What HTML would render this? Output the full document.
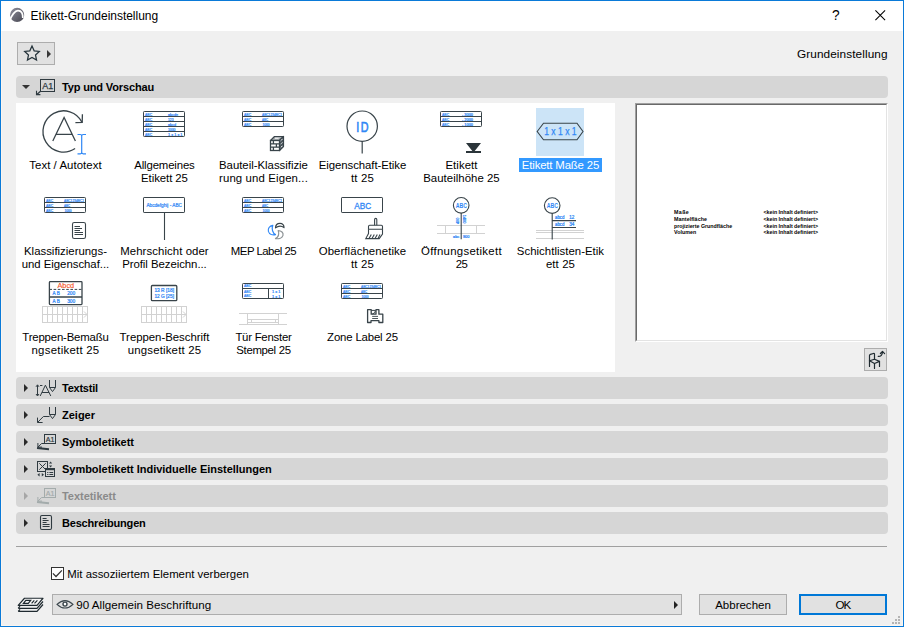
<!DOCTYPE html>
<html lang="de">
<head>
<meta charset="utf-8">
<title>Etikett-Grundeinstellung</title>
<style>
*{box-sizing:border-box;margin:0;padding:0}
html,body{width:904px;height:627px;overflow:hidden}
body{background:#f0f0f0;font-family:"Liberation Sans",sans-serif;font-size:11.5px;color:#000;position:relative}
.abs{position:absolute}
svg{display:block;overflow:visible}
#win{position:absolute;left:0;top:0;width:904px;height:627px;border:1px solid #0a7ad8;z-index:50}
#inb{position:absolute;left:1px;top:31px;width:902px;height:595px;border:1px solid #fbf5ef;border-top:0;z-index:49}
#titlebar{position:absolute;left:1px;top:1px;width:902px;height:30px;background:#fff}
.t{position:absolute;white-space:pre;line-height:14px;height:14px}
.hdr{position:absolute;left:16px;width:872px;height:22px;background:#d6d6d6;border-radius:4px}
.tri-r{position:absolute;left:8px;top:6.6px;width:0;height:0;border-left:4.5px solid #2a2a2a;border-top:4px solid transparent;border-bottom:4px solid transparent}
.tri-d{position:absolute;left:5.8px;top:8.8px;width:0;height:0;border-top:4.6px solid #333;border-left:4.1px solid transparent;border-right:4.1px solid transparent}
.hdr.dis .tri-r{border-left-color:#a6a6a6}
.hdr svg{position:absolute;left:0;top:0}
#list{position:absolute;left:16px;top:103px;width:599px;height:269px;background:#fff}
#preview{position:absolute;left:635px;top:103px;width:253px;height:239px;background:#fff;border-top:1px solid #a0a0a0;border-left:1px solid #a0a0a0;border-right:1px solid #fff;border-bottom:1px solid #fff}
#preview .in{position:absolute;left:0;top:0;right:0;bottom:0;border-top:1px solid #696969;border-left:1px solid #696969;border-right:1px solid #e3e3e3;border-bottom:1px solid #e3e3e3}
.pv{position:absolute;font-size:5.6px;line-height:6px;white-space:nowrap;color:#000;font-weight:bold;letter-spacing:-0.35px}
.btn{position:absolute;background:#e1e1e1;border:1px solid #adadad}
</style>
</head>
<body>
<div id="titlebar">
  <svg class="abs" style="left:8px;top:6px" width="16" height="16" viewBox="0 0 16 16">
    <defs><linearGradient id="g1" x1="0" y1="0" x2="1" y2="1"><stop offset="0" stop-color="#90909e"/><stop offset="1" stop-color="#44444e"/></linearGradient></defs>
    <circle cx="8.1" cy="7.9" r="7.1" fill="url(#g1)"/>
    <path d="M0.3 14.2C2.5 9 5.5 3.8 8.8 3.6C12.5 3.4 13.9 6.5 13.8 10.9" fill="none" stroke="#fff" stroke-width="1.7"/>
  </svg>
  <div class="t" style="left:831px;top:7.2px;font-size:13.8px;line-height:16px">?</div>
  <svg class="abs" style="left:874px;top:9px" width="12" height="12" viewBox="0 0 12 12"><path d="M0.4 0.4 L10.1 10.1 M10.1 0.4 L0.4 10.1" stroke="#000" stroke-width="1.05" fill="none"/></svg>
</div>

<!-- favourites button -->
<div class="btn" style="left:17px;top:42px;width:38px;height:23px">
  <svg class="abs" style="left:0;top:0" width="36" height="21" viewBox="0 0 36 21"><path d="M14.00 3.10L16.17 7.81L21.32 8.42L17.52 11.94L18.53 17.03L14.00 14.50L9.47 17.03L10.48 11.94L6.68 8.42L11.83 7.81Z" fill="none" stroke="#26343c" stroke-width="1.25" stroke-linejoin="miter"/></svg>
  <div class="abs" style="left:28.6px;top:6.5px;width:0;height:0;border-left:4.2px solid #383838;border-top:4px solid transparent;border-bottom:4px solid transparent"></div>
</div>

<div id="list"></div>
<div class="hdr" style="top:76px"><div class="tri-d"></div><svg width="44" height="22" viewBox="0 0 44 22" font-family='"Liberation Sans",sans-serif'><rect x="24.5" y="3.5" width="14" height="12" fill="none" stroke="#2f3a40" stroke-width="1"/><text x="31.7" y="12.9" font-size="9.4" fill="#2f3a40" text-anchor="middle" font-weight="normal" stroke="#2f3a40" stroke-width="0.25" textLength="11" lengthAdjust="spacingAndGlyphs">A1</text><path d="M24.5 15.3L20.8 18.4" fill="none" stroke="#2f3a40" stroke-width="1.3"/><path d="M20.5 14.8V18.6H24.4" fill="none" stroke="#2f3a40" stroke-width="1.1"/></svg></div>
<div class="t" style="left:62.00px;top:80.19px;font-size:11px;letter-spacing:-0.145px;font-weight:bold;">Typ und Vorschau</div>
<div class="hdr" style="top:377px"><div class="tri-r"></div><svg width="44" height="22" viewBox="0 0 44 22" font-family='"Liberation Sans",sans-serif'><path d="M21.5 8.2V18.4M20 9.8L21.5 7.8L23 9.8M20 17L21.5 19L23 17" fill="none" stroke="#2f3a40" stroke-width="1"/><path d="M24.2 19L29.4 8.2L34.8 19M26 15.5H33M24 8.5H26.4" fill="none" stroke="#2f3a40" stroke-width="1"/><path d="M33.5 3V10.5L36.5 14.6L39.5 10.5V3M33.5 10.5H39.5" fill="none" stroke="#2f3a40" stroke-width="1"/></svg></div>
<div class="t" style="left:62.00px;top:381.19px;font-size:11px;letter-spacing:-0.237px;font-weight:bold;">Textstil</div>
<div class="hdr" style="top:404px"><div class="tri-r"></div><svg width="44" height="22" viewBox="0 0 44 22" font-family='"Liberation Sans",sans-serif'><path d="M33.5 12.5H27.4L21.6 18.4M21.5 13.6V18.5H26.6" fill="none" stroke="#2f3a40" stroke-width="1"/><path d="M33.5 3V10.5L36.5 14.6L39.5 10.5V3M33.5 10.5H39.5" fill="none" stroke="#2f3a40" stroke-width="1"/></svg></div>
<div class="t" style="left:62.00px;top:408.19px;font-size:11px;letter-spacing:-0.002px;font-weight:bold;">Zeiger</div>
<div class="hdr" style="top:431px"><div class="tri-r"></div><svg width="44" height="22" viewBox="0 0 44 22" font-family='"Liberation Sans",sans-serif'><rect x="28.5" y="3.5" width="11" height="9" fill="none" stroke="#2f3a40" stroke-width="1"/><text x="34.1" y="11.1" font-size="7.4" fill="#2f3a40" text-anchor="middle" font-weight="normal" stroke="#2f3a40" stroke-width="0.2" textLength="8.6" lengthAdjust="spacingAndGlyphs">A1</text><path d="M28.5 12.5H25.6L22 16M21.9 12V16.1H26" fill="none" stroke="#2f3a40" stroke-width="1"/><path d="M21 16.9L33 18.2" stroke="#2f3a40" stroke-width="2"/></svg></div>
<div class="t" style="left:62.00px;top:435.19px;font-size:11px;letter-spacing:-0.010px;font-weight:bold;">Symboletikett</div>
<div class="hdr" style="top:458px"><div class="tri-r"></div><svg width="44" height="22" viewBox="0 0 44 22" font-family='"Liberation Sans",sans-serif'><rect x="21.5" y="3.5" width="10" height="10" fill="none" stroke="#2f3a40" stroke-width="1"/><path d="M23.3 5.3L29.7 11.7M29.7 5.3L23.3 11.7" stroke="#2f3a40" stroke-width="1"/><path d="M33 5.6L34.6 3.4L36.2 5.6ZM33 7.4L34.6 9.6L36.2 7.4ZM23.6 15L21.4 16.7L23.6 18.4ZM25.8 15L28 16.7L25.8 18.4Z" fill="#2f3a40"/><rect x="29.5" y="10.5" width="9" height="8" fill="#d6d6d6" stroke="#2f3a40" stroke-width="1"/><path d="M29.5 11.5H38.5" stroke="#2f3a40" stroke-width="1.4"/><path d="M31.2 14.5H32.4M33.4 14.5H37.2M31.2 16.5H32.4M33.4 16.5H37.2" stroke="#2f3a40" stroke-width="1"/></svg></div>
<div class="t" style="left:62.00px;top:462.19px;font-size:11px;letter-spacing:-0.029px;font-weight:bold;">Symboletikett Individuelle Einstellungen</div>
<div class="hdr dis" style="top:485px"><div class="tri-r"></div><svg width="44" height="22" viewBox="0 0 44 22" font-family='"Liberation Sans",sans-serif'><rect x="28.5" y="3.5" width="11" height="9" fill="none" stroke="#a3abab" stroke-width="1"/><text x="34.1" y="11.1" font-size="7.4" fill="#a3abab" text-anchor="middle" font-weight="normal" stroke="#a3abab" stroke-width="0.2" textLength="8.6" lengthAdjust="spacingAndGlyphs">A1</text><path d="M28.5 12.5H25.6L22 16M21.9 12V16.1H26" fill="none" stroke="#a3abab" stroke-width="1"/><path d="M21 16.9L33 18.2" stroke="#a3abab" stroke-width="2"/></svg></div>
<div class="t" style="left:62.00px;top:489.19px;font-size:11px;letter-spacing:-0.036px;font-weight:bold;color:#8a8a8a;">Textetikett</div>
<div class="hdr" style="top:512px"><div class="tri-r"></div><svg width="44" height="22" viewBox="0 0 44 22" font-family='"Liberation Sans",sans-serif'><rect x="24.5" y="3.5" width="11" height="14" rx="1.4" fill="none" stroke="#2f3a40" stroke-width="1.1"/><path d="M26.6 6.5H30.6M26.6 8.5H32.6M26.6 10.5H30.6M26.6 12.5H33.6M26.6 14.5H33.6" stroke="#2f3a40" stroke-width="1"/></svg></div>
<div class="t" style="left:62.00px;top:516.19px;font-size:11px;letter-spacing:-0.185px;font-weight:bold;">Beschreibungen</div>
<svg class="abs" style="left:41.0px;top:108px" width="48" height="48" viewBox="0 0 48 48" font-family='"Liberation Sans",sans-serif'><path d="M41.1 14.4A20.6 20.6 0 1 0 34.1 40.5" fill="none" stroke="#39444a" stroke-width="1.3"/><path d="M34.4 14.6L41.2 14.3L41.4 6.2" fill="none" stroke="#39444a" stroke-width="1.3"/><path d="M11.8 33L23.1 9.4L34.4 33M15.2 26.4H31.2" fill="none" stroke="#39444a" stroke-width="1.3"/><path d="M36.5 26.5H39.3Q40.7 26.5 40.7 28V44.3Q40.7 45.8 39.3 45.8H36.5M45 26.5H42.2Q40.7 26.5 40.7 28M40.7 44.3Q40.7 45.8 42.2 45.8H45" fill="none" stroke="#2f87f5" stroke-width="1.2"/></svg>
<div class="t" style="left:29.30px;top:157.65px;font-size:11.4px;letter-spacing:0.053px;">Text / Autotext</div>
<svg class="abs" style="left:140.0px;top:108px" width="48" height="48" viewBox="0 0 48 48" font-family='"Liberation Sans",sans-serif'><rect x="3.5" y="3.5" width="41.0" height="25.0" rx="0.8" fill="#fff" stroke="#39444a" stroke-width="1"/><path d="M3.5 8.50H44.5" stroke="#39444a" stroke-width="1"/><path d="M3.5 13.50H44.5" stroke="#39444a" stroke-width="1"/><path d="M3.5 18.50H44.5" stroke="#39444a" stroke-width="1"/><path d="M3.5 23.50H44.5" stroke="#39444a" stroke-width="1"/><text x="5.1" y="7.70" font-size="3.6" fill="#2f87f5" text-anchor="start" font-weight="normal" stroke="#2f87f5" stroke-width="0.22" textLength="7" lengthAdjust="spacingAndGlyphs">ABC</text><text x="28" y="7.70" font-size="3.6" fill="#2f87f5" text-anchor="start" font-weight="normal" stroke="#2f87f5" stroke-width="0.22" textLength="10" lengthAdjust="spacingAndGlyphs">abcde</text><text x="5.1" y="12.70" font-size="3.6" fill="#2f87f5" text-anchor="start" font-weight="normal" stroke="#2f87f5" stroke-width="0.22" textLength="7" lengthAdjust="spacingAndGlyphs">ABC</text><text x="28" y="12.70" font-size="3.6" fill="#2f87f5" text-anchor="start" font-weight="normal" stroke="#2f87f5" stroke-width="0.22" textLength="5.5" lengthAdjust="spacingAndGlyphs">123</text><text x="5.1" y="17.70" font-size="3.6" fill="#2f87f5" text-anchor="start" font-weight="normal" stroke="#2f87f5" stroke-width="0.22" textLength="7" lengthAdjust="spacingAndGlyphs">ABC</text><text x="28" y="17.70" font-size="3.6" fill="#2f87f5" text-anchor="start" font-weight="normal" stroke="#2f87f5" stroke-width="0.22" textLength="8" lengthAdjust="spacingAndGlyphs">abcd</text><text x="5.1" y="22.70" font-size="3.6" fill="#2f87f5" text-anchor="start" font-weight="normal" stroke="#2f87f5" stroke-width="0.22" textLength="7" lengthAdjust="spacingAndGlyphs">ABC</text><text x="28" y="22.70" font-size="3.6" fill="#2f87f5" text-anchor="start" font-weight="normal" stroke="#2f87f5" stroke-width="0.22" textLength="7.5" lengthAdjust="spacingAndGlyphs">1000</text><text x="5.1" y="27.70" font-size="3.6" fill="#2f87f5" text-anchor="start" font-weight="normal" stroke="#2f87f5" stroke-width="0.22" textLength="7" lengthAdjust="spacingAndGlyphs">ABC</text><text x="28" y="27.70" font-size="3.6" fill="#2f87f5" text-anchor="start" font-weight="normal" stroke="#2f87f5" stroke-width="0.22" textLength="14.5" lengthAdjust="spacingAndGlyphs">1 x 1 x 1</text></svg>
<div class="t" style="left:134.30px;top:157.65px;font-size:11.4px;letter-spacing:-0.155px;">Allgemeines</div>
<div class="t" style="left:141.10px;top:170.65px;font-size:11.4px;letter-spacing:-0.073px;">Etikett 25</div>
<svg class="abs" style="left:239.0px;top:108px" width="48" height="48" viewBox="0 0 48 48" font-family='"Liberation Sans",sans-serif'><rect x="3.5" y="3.5" width="41.0" height="15.0" rx="0.8" fill="#fff" stroke="#39444a" stroke-width="1"/><path d="M3.5 8.50H44.5" stroke="#39444a" stroke-width="1"/><path d="M3.5 13.50H44.5" stroke="#39444a" stroke-width="1"/><text x="5.1" y="7.70" font-size="3.6" fill="#2f87f5" text-anchor="start" font-weight="normal" stroke="#2f87f5" stroke-width="0.22" textLength="7" lengthAdjust="spacingAndGlyphs">ABC</text><text x="23" y="7.70" font-size="3.6" fill="#2f87f5" text-anchor="start" font-weight="normal" stroke="#2f87f5" stroke-width="0.22" textLength="20" lengthAdjust="spacingAndGlyphs">ABC1234BC1</text><text x="5.1" y="12.70" font-size="3.6" fill="#2f87f5" text-anchor="start" font-weight="normal" stroke="#2f87f5" stroke-width="0.22" textLength="7" lengthAdjust="spacingAndGlyphs">ABC</text><text x="23" y="12.70" font-size="3.6" fill="#2f87f5" text-anchor="start" font-weight="normal" stroke="#2f87f5" stroke-width="0.22" textLength="6" lengthAdjust="spacingAndGlyphs">ABC</text><text x="5.1" y="17.70" font-size="3.6" fill="#2f87f5" text-anchor="start" font-weight="normal" stroke="#2f87f5" stroke-width="0.22" textLength="7" lengthAdjust="spacingAndGlyphs">ABC</text><text x="23.5" y="17.70" font-size="3.6" fill="#2f87f5" text-anchor="start" font-weight="normal" stroke="#2f87f5" stroke-width="0.22" textLength="7" lengthAdjust="spacingAndGlyphs">1000</text><path d="M31.5 32.5L35.5 28.5H44.5L40.5 32.5Z" fill="#a9afb2" stroke="#39444a" stroke-width="1.2" stroke-linejoin="round"/><path d="M40.5 32.5L44.5 28.5V38.5L40.5 42.5Z" fill="#79838a" stroke="#39444a" stroke-width="1.2" stroke-linejoin="round"/><rect x="31.5" y="32.5" width="9" height="10" fill="#fff" stroke="#39444a" stroke-width="1.3"/><path d="M31.5 35.8H40.5M31.5 39.2H40.5M34.4 32.5V35.8M37.4 35.8V39.2M34.4 39.2V42.5" stroke="#39444a" stroke-width="1.3" fill="none"/><path d="M36 30.3H39.6" stroke="#fff" stroke-width="0.9"/><path d="M40.5 35.8L44.5 31.8M40.5 39.2L44.5 35.2" stroke="#39444a" stroke-width="1.1"/><path d="M42.2 32.2L43.2 31.2M42.2 35.6L43.2 34.6M42.2 39L43.2 38" stroke="#fff" stroke-width="0.9"/></svg>
<div class="t" style="left:219.00px;top:157.65px;font-size:11.4px;letter-spacing:-0.018px;">Bauteil-Klassifizie</div>
<div class="t" style="left:219.00px;top:170.65px;font-size:11.4px;letter-spacing:0.128px;">rung und Eigen...</div>
<svg class="abs" style="left:338.0px;top:108px" width="48" height="48" viewBox="0 0 48 48" font-family='"Liberation Sans",sans-serif'><circle cx="24.2" cy="18.2" r="15.2" fill="#fff" stroke="#39444a" stroke-width="1.2"/><path d="M24.2 33.2V45.5" stroke="#39444a" stroke-width="1.2"/><text x="0" y="0" font-size="13.8" fill="#2f87f5" text-anchor="start" font-weight="normal" transform="translate(18.2 23.8) scale(0.78 1)" letter-spacing="2.05" stroke="#2f87f5" stroke-width="0.6">ID</text></svg>
<div class="t" style="left:318.70px;top:157.65px;font-size:11.4px;letter-spacing:-0.065px;">Eigenschaft-Etike</div>
<div class="t" style="left:350.90px;top:170.65px;font-size:11.4px;letter-spacing:0.203px;">tt 25</div>
<svg class="abs" style="left:437.0px;top:108px" width="48" height="48" viewBox="0 0 48 48" font-family='"Liberation Sans",sans-serif'><rect x="3.5" y="3.5" width="41.0" height="15.0" rx="0.8" fill="#fff" stroke="#39444a" stroke-width="1"/><path d="M3.5 8.50H44.5" stroke="#39444a" stroke-width="1"/><path d="M3.5 13.50H44.5" stroke="#39444a" stroke-width="1"/><text x="5.1" y="7.70" font-size="3.6" fill="#2f87f5" text-anchor="start" font-weight="normal" stroke="#2f87f5" stroke-width="0.22" textLength="7" lengthAdjust="spacingAndGlyphs">ABC</text><text x="25" y="7.70" font-size="3.6" fill="#2f87f5" text-anchor="start" font-weight="normal" stroke="#2f87f5" stroke-width="0.22" textLength="11" lengthAdjust="spacingAndGlyphs">- 3000</text><text x="5.1" y="12.70" font-size="3.6" fill="#2f87f5" text-anchor="start" font-weight="normal" stroke="#2f87f5" stroke-width="0.22" textLength="7" lengthAdjust="spacingAndGlyphs">ABC</text><text x="25" y="12.70" font-size="3.6" fill="#2f87f5" text-anchor="start" font-weight="normal" stroke="#2f87f5" stroke-width="0.22" textLength="11" lengthAdjust="spacingAndGlyphs">- 2000</text><text x="5.1" y="17.70" font-size="3.6" fill="#2f87f5" text-anchor="start" font-weight="normal" stroke="#2f87f5" stroke-width="0.22" textLength="7" lengthAdjust="spacingAndGlyphs">ABC</text><text x="25" y="17.70" font-size="3.6" fill="#2f87f5" text-anchor="start" font-weight="normal" stroke="#2f87f5" stroke-width="0.22" textLength="11" lengthAdjust="spacingAndGlyphs">- 1000</text><path d="M29 35H44L37.7 43H44V45H29V43H35.3Z" fill="#2b353a"/></svg>
<div class="t" style="left:445.40px;top:157.65px;font-size:11.4px;letter-spacing:0.074px;">Etikett</div>
<div class="t" style="left:423.20px;top:170.65px;font-size:11.4px;letter-spacing:0.038px;">Bauteilhöhe 25</div>
<div class="abs" style="left:536.0px;top:108px;width:48px;height:48px;background:#cce4f7"></div>
<div class="abs" style="left:519px;top:158px;width:83px;height:14px;background:#3399ff"></div>
<svg class="abs" style="left:536.0px;top:108px" width="48" height="48" viewBox="0 0 48 48" font-family='"Liberation Sans",sans-serif'><path d="M1.2 23.5L7.5 15.2H41L47 23.5L41 31.8H7.5Z" fill="none" stroke="#39444a" stroke-width="1.1"/><text x="24.4" y="27.4" font-size="10.2" fill="#2f87f5" text-anchor="middle" font-weight="normal" stroke="#2f87f5" stroke-width="0.25" textLength="32.4" lengthAdjust="spacingAndGlyphs">1 x 1 x 1</text></svg>
<div class="t" style="left:521.85px;top:157.65px;font-size:11.4px;letter-spacing:-0.169px;color:#fff;">Etikett Maße 25</div>
<svg class="abs" style="left:41.0px;top:194px" width="48" height="48" viewBox="0 0 48 48" font-family='"Liberation Sans",sans-serif'><rect x="3.5" y="3.5" width="41.0" height="15.0" rx="0.8" fill="#fff" stroke="#39444a" stroke-width="1"/><path d="M3.5 8.50H44.5" stroke="#39444a" stroke-width="1"/><path d="M3.5 13.50H44.5" stroke="#39444a" stroke-width="1"/><text x="5.1" y="7.70" font-size="3.6" fill="#2f87f5" text-anchor="start" font-weight="normal" stroke="#2f87f5" stroke-width="0.22" textLength="7" lengthAdjust="spacingAndGlyphs">ABC</text><text x="23" y="7.70" font-size="3.6" fill="#2f87f5" text-anchor="start" font-weight="normal" stroke="#2f87f5" stroke-width="0.22" textLength="20" lengthAdjust="spacingAndGlyphs">ABC1234BC1</text><text x="5.1" y="12.70" font-size="3.6" fill="#2f87f5" text-anchor="start" font-weight="normal" stroke="#2f87f5" stroke-width="0.22" textLength="7" lengthAdjust="spacingAndGlyphs">ABC</text><text x="23" y="12.70" font-size="3.6" fill="#2f87f5" text-anchor="start" font-weight="normal" stroke="#2f87f5" stroke-width="0.22" textLength="6" lengthAdjust="spacingAndGlyphs">ABC</text><text x="5.1" y="17.70" font-size="3.6" fill="#2f87f5" text-anchor="start" font-weight="normal" stroke="#2f87f5" stroke-width="0.22" textLength="7" lengthAdjust="spacingAndGlyphs">ABC</text><text x="23.5" y="17.70" font-size="3.6" fill="#2f87f5" text-anchor="start" font-weight="normal" stroke="#2f87f5" stroke-width="0.22" textLength="7" lengthAdjust="spacingAndGlyphs">1000</text><rect x="31.5" y="28.5" width="13" height="16" rx="1.8" fill="#fff" stroke="#39444a" stroke-width="1.1"/><path d="M33.5 32.5H39M33.5 34.5H41M33.5 36.5H39M33.5 38.5H42M33.5 40.5H42" stroke="#39444a" stroke-width="1"/></svg>
<div class="t" style="left:24.00px;top:243.65px;font-size:11.4px;letter-spacing:0.000px;">Klassifizierungs-</div>
<div class="t" style="left:21.70px;top:256.65px;font-size:11.4px;letter-spacing:-0.029px;">und Eigenschaf...</div>
<svg class="abs" style="left:140.0px;top:194px" width="48" height="48" viewBox="0 0 48 48" font-family='"Liberation Sans",sans-serif'><rect x="3.5" y="3.5" width="41" height="15" rx="0.6" fill="#fff" stroke="#39444a" stroke-width="1"/><path d="M24.5 18.5V46" stroke="#39444a" stroke-width="1.1"/><text x="24.2" y="12.7" font-size="4.6" fill="#2f87f5" text-anchor="middle" font-weight="normal" stroke="#2f87f5" stroke-width="0.2" textLength="35.6" lengthAdjust="spacingAndGlyphs">Abcdefghij - ABC</text></svg>
<div class="t" style="left:120.20px;top:243.65px;font-size:11.4px;letter-spacing:0.073px;">Mehrschicht oder</div>
<div class="t" style="left:122.20px;top:256.65px;font-size:11.4px;letter-spacing:-0.052px;">Profil Bezeichn...</div>
<svg class="abs" style="left:239.0px;top:194px" width="48" height="48" viewBox="0 0 48 48" font-family='"Liberation Sans",sans-serif'><rect x="3.5" y="3.5" width="41.0" height="15.0" rx="0.8" fill="#fff" stroke="#39444a" stroke-width="1"/><path d="M3.5 8.50H44.5" stroke="#39444a" stroke-width="1"/><path d="M3.5 13.50H44.5" stroke="#39444a" stroke-width="1"/><text x="5.1" y="7.70" font-size="3.6" fill="#2f87f5" text-anchor="start" font-weight="normal" stroke="#2f87f5" stroke-width="0.22" textLength="7" lengthAdjust="spacingAndGlyphs">ABC</text><text x="23" y="7.70" font-size="3.6" fill="#2f87f5" text-anchor="start" font-weight="normal" stroke="#2f87f5" stroke-width="0.22" textLength="20" lengthAdjust="spacingAndGlyphs">ABC1234BC1</text><text x="5.1" y="12.70" font-size="3.6" fill="#2f87f5" text-anchor="start" font-weight="normal" stroke="#2f87f5" stroke-width="0.22" textLength="7" lengthAdjust="spacingAndGlyphs">ABC</text><text x="23" y="12.70" font-size="3.6" fill="#2f87f5" text-anchor="start" font-weight="normal" stroke="#2f87f5" stroke-width="0.22" textLength="6" lengthAdjust="spacingAndGlyphs">ABC</text><text x="5.1" y="17.70" font-size="3.6" fill="#2f87f5" text-anchor="start" font-weight="normal" stroke="#2f87f5" stroke-width="0.22" textLength="7" lengthAdjust="spacingAndGlyphs">ABC</text><text x="23.5" y="17.70" font-size="3.6" fill="#2f87f5" text-anchor="start" font-weight="normal" stroke="#2f87f5" stroke-width="0.22" textLength="7" lengthAdjust="spacingAndGlyphs">1000</text><path d="M33.8 31.3C30.5 31.8 28.6 34.6 29.4 37.4C30.4 40.4 33.6 41.4 36.5 40.6C33.6 39 32.4 35 33.8 31.3Z" fill="none" stroke="#2f87f5" stroke-width="1.2" stroke-linejoin="round"/><path d="M36.5 33.9C36.6 31 38.6 29.4 41 29.4C43.6 29.4 45.2 31.2 45 33.6C42.6 31.8 39.2 31.8 36.5 33.9Z" fill="none" stroke="#39444a" stroke-width="1.2" stroke-linejoin="round"/><path d="M39.2 36.6C42.4 36.6 44.6 38.8 44 41.2C43.2 43.8 40 45.2 36.5 44.6C39.2 43 40.4 40 39.2 36.6Z" fill="none" stroke="#8d9396" stroke-width="1.2" stroke-linejoin="round"/></svg>
<div class="t" style="left:230.80px;top:243.65px;font-size:11.4px;letter-spacing:-0.501px;">MEP Label 25</div>
<svg class="abs" style="left:338.0px;top:194px" width="48" height="48" viewBox="0 0 48 48" font-family='"Liberation Sans",sans-serif'><rect x="3.5" y="3.5" width="41" height="15" rx="0.6" fill="#fff" stroke="#39444a" stroke-width="1"/><text x="24.8" y="14.5" font-size="9.6" fill="#2f87f5" text-anchor="middle" font-weight="normal" stroke="#2f87f5" stroke-width="0.3" textLength="17" lengthAdjust="spacingAndGlyphs">ABC</text><g fill="none" stroke="#39444a" stroke-width="1.1"><path d="M36.6 31.3V25.5Q36.6 24.4 37.7 24.4Q38.8 24.4 38.8 25.5V31.3"/><path d="M30.5 35.3V32.5Q30.5 31.3 31.7 31.3H43.3Q44.5 31.3 44.5 32.5V35.3Z"/><path d="M30.5 35.3V39.5L27.8 44.6H41.2L44.5 40V35.3"/><path d="M33.3 40.5L31 44.6M36.3 40.5L34 44.6M39.3 40.5L37 44.6M42 40.5L40 44.6"/></g></svg>
<div class="t" style="left:318.70px;top:243.65px;font-size:11.4px;letter-spacing:0.088px;">Oberflächenetike</div>
<div class="t" style="left:350.90px;top:256.65px;font-size:11.4px;letter-spacing:0.203px;">tt 25</div>
<svg class="abs" style="left:437.0px;top:194px" width="48" height="48" viewBox="0 0 48 48" font-family='"Liberation Sans",sans-serif'><path d="M0 31.5H48M0 39.5H48M8.5 31.5V39.5M39.5 31.5V39.5" stroke="#d2d2d2" stroke-width="1" fill="none"/><circle cx="24.2" cy="11.3" r="7.8" fill="#fff" stroke="#39444a" stroke-width="1.1"/><path d="M24.2 19.1V45.3" stroke="#39444a" stroke-width="1.1"/><text x="24.3" y="13.8" font-size="6.6" fill="#2f87f5" text-anchor="middle" font-weight="bold"  textLength="11.2" lengthAdjust="spacingAndGlyphs">ABC</text><text x="0" y="0" font-size="3.8" fill="#2f87f5" text-anchor="start" font-weight="normal" transform="translate(22.2 30) rotate(-90)" stroke="#2f87f5" stroke-width="0.24">400</text><text x="0" y="0" font-size="3.8" fill="#2f87f5" text-anchor="start" font-weight="normal" transform="translate(26.2 20.8) rotate(90)" stroke="#2f87f5" stroke-width="0.24">1400</text><text x="22.2" y="44.2" font-size="3.8" fill="#2f87f5" text-anchor="end" font-weight="normal"  stroke="#2f87f5" stroke-width="0.24">abc</text><text x="26" y="44.2" font-size="3.8" fill="#2f87f5" text-anchor="start" font-weight="normal"  stroke="#2f87f5" stroke-width="0.24">900</text></svg>
<div class="t" style="left:421.00px;top:243.65px;font-size:11.4px;letter-spacing:0.302px;">Öffnungsetikett</div>
<div class="t" style="left:455.70px;top:256.65px;font-size:11.4px;letter-spacing:-0.540px;">25</div>
<svg class="abs" style="left:536.0px;top:194px" width="48" height="48" viewBox="0 0 48 48" font-family='"Liberation Sans",sans-serif'><path d="M0 36.5H48M0 38.5H48M0 44.5H48" stroke="#d2d2d2" stroke-width="1" fill="none"/><circle cx="16.2" cy="11.6" r="7.8" fill="#fff" stroke="#39444a" stroke-width="1.1"/><path d="M16.2 19.4V45.5M16.2 26.6H40M16.2 33.5H40" stroke="#39444a" stroke-width="1.1" fill="none"/><text x="16.3" y="14.2" font-size="6.6" fill="#2f87f5" text-anchor="middle" font-weight="bold"  textLength="11.2" lengthAdjust="spacingAndGlyphs">ABC</text><text x="19" y="25.2" font-size="4.6" fill="#2f87f5" text-anchor="start" font-weight="normal"  stroke="#2f87f5" stroke-width="0.24" textLength="9.4" lengthAdjust="spacingAndGlyphs">abcd</text><text x="33.2" y="25.2" font-size="4.6" fill="#2f87f5" text-anchor="start" font-weight="normal"  stroke="#2f87f5" stroke-width="0.24">12</text><text x="19" y="32.2" font-size="4.6" fill="#2f87f5" text-anchor="start" font-weight="normal"  stroke="#2f87f5" stroke-width="0.24" textLength="9.4" lengthAdjust="spacingAndGlyphs">abcd</text><text x="33.2" y="32.2" font-size="4.6" fill="#2f87f5" text-anchor="start" font-weight="normal"  stroke="#2f87f5" stroke-width="0.24">34</text></svg>
<div class="t" style="left:516.85px;top:243.65px;font-size:11.4px;letter-spacing:0.028px;">Schichtlisten-Etik</div>
<div class="t" style="left:545.90px;top:256.65px;font-size:11.4px;letter-spacing:0.113px;">ett 25</div>
<svg class="abs" style="left:41.0px;top:280px" width="48" height="48" viewBox="0 0 48 48" font-family='"Liberation Sans",sans-serif'><rect x="8.4" y="1.6" width="32.6" height="23" rx="0.8" fill="#fff" stroke="#39444a" stroke-width="1.3"/><path d="M8.4 9.4H41" stroke="#39444a" stroke-width="1" stroke-dasharray="2.6 1.6"/><path d="M8.4 17H41" stroke="#39444a" stroke-width="1.3"/><text x="24.8" y="8.3" font-size="8" fill="#f4562c" text-anchor="middle" font-weight="normal" stroke="#f4562c" stroke-width="0.18" textLength="16.6" lengthAdjust="spacingAndGlyphs">Abcd</text><text x="11.6" y="15.2" font-size="4.6" fill="#2f87f5" text-anchor="start" font-weight="normal"  stroke="#2f87f5" stroke-width="0.24">A B</text><text x="26.2" y="15.2" font-size="4.6" fill="#2f87f5" text-anchor="start" font-weight="normal"  stroke="#2f87f5" stroke-width="0.24" textLength="8" lengthAdjust="spacingAndGlyphs">200</text><text x="11.6" y="22.8" font-size="4.6" fill="#2f87f5" text-anchor="start" font-weight="normal"  stroke="#2f87f5" stroke-width="0.24">A B</text><text x="26.2" y="22.8" font-size="4.6" fill="#2f87f5" text-anchor="start" font-weight="normal"  stroke="#2f87f5" stroke-width="0.24" textLength="8" lengthAdjust="spacingAndGlyphs">300</text><rect x="1.5" y="26.5" width="45" height="16" fill="none" stroke="#d2d2d2" stroke-width="1"/><path d="M1.5 34.5H46.5" stroke="#d2d2d2" stroke-width="1"/><path d="M6.5 26.5V42.5" stroke="#d2d2d2" stroke-width="1"/><path d="M11.5 26.5V42.5" stroke="#d2d2d2" stroke-width="1"/><path d="M16.5 26.5V42.5" stroke="#d2d2d2" stroke-width="1"/><path d="M21.5 26.5V42.5" stroke="#d2d2d2" stroke-width="1"/><path d="M26.5 26.5V42.5" stroke="#d2d2d2" stroke-width="1"/><path d="M31.5 26.5V42.5" stroke="#d2d2d2" stroke-width="1"/><path d="M36.5 26.5V42.5" stroke="#d2d2d2" stroke-width="1"/><path d="M41.5 26.5V42.5" stroke="#d2d2d2" stroke-width="1"/><path d="M43 31.5L46 34.5L43 37.5" fill="none" stroke="#d2d2d2" stroke-width="1"/></svg>
<div class="t" style="left:22.35px;top:329.65px;font-size:11.4px;letter-spacing:-0.187px;">Treppen-Bemaßu</div>
<div class="t" style="left:31.50px;top:342.65px;font-size:11.4px;letter-spacing:0.258px;">ngsetikett 25</div>
<svg class="abs" style="left:140.0px;top:280px" width="48" height="48" viewBox="0 0 48 48" font-family='"Liberation Sans",sans-serif'><rect x="11.4" y="5.5" width="25.4" height="15.2" rx="1" fill="#fff" stroke="#39444a" stroke-width="1.3"/><text x="24.2" y="12.2" font-size="4.5" fill="#2f87f5" text-anchor="middle" font-weight="normal"  stroke="#2f87f5" stroke-width="0.24" textLength="19.6" lengthAdjust="spacingAndGlyphs">13 R [18]</text><text x="24.2" y="17.8" font-size="4.5" fill="#2f87f5" text-anchor="middle" font-weight="normal"  stroke="#2f87f5" stroke-width="0.24" textLength="19.6" lengthAdjust="spacingAndGlyphs">12 G [25]</text><rect x="1.5" y="26.5" width="45" height="16" fill="none" stroke="#d2d2d2" stroke-width="1"/><path d="M1.5 34.5H46.5" stroke="#d2d2d2" stroke-width="1"/><path d="M6.5 26.5V42.5" stroke="#d2d2d2" stroke-width="1"/><path d="M11.5 26.5V42.5" stroke="#d2d2d2" stroke-width="1"/><path d="M16.5 26.5V42.5" stroke="#d2d2d2" stroke-width="1"/><path d="M21.5 26.5V42.5" stroke="#d2d2d2" stroke-width="1"/><path d="M26.5 26.5V42.5" stroke="#d2d2d2" stroke-width="1"/><path d="M31.5 26.5V42.5" stroke="#d2d2d2" stroke-width="1"/><path d="M36.5 26.5V42.5" stroke="#d2d2d2" stroke-width="1"/><path d="M41.5 26.5V42.5" stroke="#d2d2d2" stroke-width="1"/><path d="M43 31.5L46 34.5L43 37.5" fill="none" stroke="#d2d2d2" stroke-width="1"/></svg>
<div class="t" style="left:119.60px;top:329.65px;font-size:11.4px;letter-spacing:-0.023px;">Treppen-Beschrift</div>
<div class="t" style="left:127.75px;top:342.65px;font-size:11.4px;letter-spacing:0.180px;">ungsetikett 25</div>
<svg class="abs" style="left:239.0px;top:280px" width="48" height="48" viewBox="0 0 48 48" font-family='"Liberation Sans",sans-serif'><rect x="3.5" y="3.5" width="41" height="15" rx="0.8" fill="#fff" stroke="#39444a" stroke-width="1"/><path d="M3.5 8.5H44.5M29.5 8.5V18.5" stroke="#39444a" stroke-width="1" fill="none"/><text x="5.1" y="7.4" font-size="3.6" fill="#2f87f5" text-anchor="start" font-weight="normal"  stroke="#2f87f5" stroke-width="0.24" textLength="7" lengthAdjust="spacingAndGlyphs">ABC</text><text x="5.1" y="12.6" font-size="3.6" fill="#2f87f5" text-anchor="start" font-weight="normal"  stroke="#2f87f5" stroke-width="0.24" textLength="7" lengthAdjust="spacingAndGlyphs">ABC</text><text x="5.1" y="17.4" font-size="3.6" fill="#2f87f5" text-anchor="start" font-weight="normal"  stroke="#2f87f5" stroke-width="0.24" textLength="7" lengthAdjust="spacingAndGlyphs">ABC</text><text x="33" y="12.8" font-size="3.9" fill="#2f87f5" text-anchor="start" font-weight="normal"  stroke="#2f87f5" stroke-width="0.24">1 x 1</text><text x="33" y="17.6" font-size="3.9" fill="#2f87f5" text-anchor="start" font-weight="normal"  stroke="#2f87f5" stroke-width="0.24">1 x 1</text><path d="M0 33.5H48M0 44.5H48M8.5 33.5V44.5M39.5 33.5V44.5M8.6 39.5H39.8M8.6 42.5H39.8M12.5 39.5V42.5M36.5 39.5V42.5" stroke="#d2d2d2" stroke-width="1" fill="none"/></svg>
<div class="t" style="left:235.40px;top:329.65px;font-size:11.4px;letter-spacing:-0.247px;">Tür Fenster</div>
<div class="t" style="left:236.30px;top:342.65px;font-size:11.4px;letter-spacing:-0.327px;">Stempel 25</div>
<svg class="abs" style="left:338.0px;top:280px" width="48" height="48" viewBox="0 0 48 48" font-family='"Liberation Sans",sans-serif'><rect x="3.5" y="3.5" width="41.0" height="15.0" rx="0.8" fill="#fff" stroke="#39444a" stroke-width="1"/><path d="M3.5 8.50H44.5" stroke="#39444a" stroke-width="1"/><path d="M3.5 13.50H44.5" stroke="#39444a" stroke-width="1"/><text x="5.1" y="7.70" font-size="3.6" fill="#2f87f5" text-anchor="start" font-weight="normal" stroke="#2f87f5" stroke-width="0.22" textLength="7" lengthAdjust="spacingAndGlyphs">ABC</text><text x="23" y="7.70" font-size="3.6" fill="#2f87f5" text-anchor="start" font-weight="normal" stroke="#2f87f5" stroke-width="0.22" textLength="20" lengthAdjust="spacingAndGlyphs">ABC1234BC1</text><text x="5.1" y="12.70" font-size="3.6" fill="#2f87f5" text-anchor="start" font-weight="normal" stroke="#2f87f5" stroke-width="0.22" textLength="7" lengthAdjust="spacingAndGlyphs">ABC</text><text x="23" y="12.70" font-size="3.6" fill="#2f87f5" text-anchor="start" font-weight="normal" stroke="#2f87f5" stroke-width="0.22" textLength="6" lengthAdjust="spacingAndGlyphs">ABC</text><text x="5.1" y="17.70" font-size="3.6" fill="#2f87f5" text-anchor="start" font-weight="normal" stroke="#2f87f5" stroke-width="0.22" textLength="7" lengthAdjust="spacingAndGlyphs">ABC</text><text x="23.5" y="17.70" font-size="3.6" fill="#2f87f5" text-anchor="start" font-weight="normal" stroke="#2f87f5" stroke-width="0.22" textLength="7" lengthAdjust="spacingAndGlyphs">1000</text><path d="M29.6 29.7H33.2V34.2H38V29.7H40.9V34.2H44.8V42.5H40.9V40.6H33V42.5H29.6Z" fill="none" stroke="#39444a" stroke-width="1.3" stroke-linejoin="round"/><path d="M33.2 30.4H37.6M37.5 30.6Q37.3 33.6 34.2 34" fill="none" stroke="#39444a" stroke-width="1"/><path d="M34.2 36.4H40M34.2 38.5H40" stroke="#39444a" stroke-width="0.9"/></svg>
<div class="t" style="left:327.10px;top:329.65px;font-size:11.4px;letter-spacing:-0.161px;">Zone Label 25</div>

<div id="preview"><div class="in"></div>
</div>
<div class="btn" style="left:864px;top:348px;width:23px;height:23px">
  <svg class="abs" style="left:-1px;top:-1px" width="23" height="23" viewBox="0 0 23 23" fill="none" stroke="#1f2a30" stroke-width="1.2" stroke-linecap="round" stroke-linejoin="round">
    <path d="M5.5 18.4V7.6Q5.5 6.7 6.4 6.4L9.4 5.5Q10.5 5.2 10.5 6.3V11.3"/>
    <path d="M5.5 12.8L10.5 11.3L15.5 13.4L10.5 15.5Z"/>
    <path d="M10.5 15.5V20.5M15.5 13.4V18.5"/>
    <path d="M14.2 8.4Q18.3 8.6 18.5 3.8M16.4 5.5L18.5 3.4L20.6 5.6"/>
  </svg>
</div>

<div class="abs" style="left:16px;top:546px;width:871px;height:1px;background:#a0a0a0"></div>

<div class="abs" style="left:51px;top:567px;width:13px;height:13px;background:#fff;border:1px solid #333">
  <svg class="abs" style="left:0;top:0" width="11" height="11" viewBox="0 0 11 11"><path d="M0.9 5.4 L4 8.5 L9.9 2.4" fill="none" stroke="#333" stroke-width="1.25"/></svg>
</div>

<svg class="abs" style="left:14px;top:592px" width="40" height="28" viewBox="0 0 40 28" fill="none" stroke="#1f2a30" stroke-width="1.2">
  <path d="M4.2 19.4H23L29 12.5M4.2 19.4L6 17.3M4.2 16.3H23L29 9.5M4.2 16.3L6 14.2"/>
  <path d="M10.5 6.25H29L23 13.3H4.2Z" fill="#f7f7f7" stroke-linejoin="round"/>
  <path d="M11.8 8.3H16.7L14.3 11.4H9.4ZM20.3 8.3L17.6 11.4M23.4 8.3L20.5 11.4"/>
</svg>
<div class="btn" style="left:52px;top:594px;width:630px;height:21px">
  <svg class="abs" style="left:-1px;top:-1px" width="30" height="21" viewBox="0 0 30 21" fill="none" stroke="#3b464c" stroke-width="1.1">
    <path d="M5 10.3Q13 2.9 21 10.3Q13 17.7 5 10.3Z"/>
    <circle cx="13" cy="10.1" r="2" fill="#fff" stroke-width="1.4"/>
  </svg>
  <div class="abs" style="left:621px;top:6px;width:0;height:0;border-left:4.5px solid #222;border-top:4px solid transparent;border-bottom:4px solid transparent"></div>
</div>
<div class="btn" style="left:699px;top:594px;width:88px;height:21px"></div>
<div class="btn" style="left:799px;top:594px;width:88px;height:21px;border:2px solid #0078d7"></div>
<svg class="abs" style="left:890px;top:614px" width="12" height="12" viewBox="0 0 12 12" fill="#b4b4b4"><rect x="8" y="2" width="2" height="2"/><rect x="5" y="5" width="2" height="2"/><rect x="8" y="5" width="2" height="2"/><rect x="2" y="8" width="2" height="2"/><rect x="5" y="8" width="2" height="2"/><rect x="8" y="8" width="2" height="2"/></svg>
<div class="t" style="left:30.60px;top:8.84px;font-size:12px;letter-spacing:-0.024px;">Etikett-Grundeinstellung</div>
<div class="t" style="left:797.00px;top:46.91px;font-size:11.8px;letter-spacing:0.087px;">Grundeinstellung</div>
<div class="t" style="left:67.30px;top:567.05px;font-size:11.4px;letter-spacing:-0.004px;">Mit assoziiertem Element verbergen</div>
<div class="t" style="left:76.20px;top:597.98px;font-size:11.6px;letter-spacing:0.035px;">90 Allgemein Beschriftung</div>
<div class="t" style="left:715.15px;top:598.02px;font-size:11.5px;letter-spacing:0.008px;">Abbrechen</div>
<div class="t" style="left:835.50px;top:597.98px;font-size:11.6px;letter-spacing:-1.080px;">OK</div>
<div class="t" style="left:674.00px;top:205.16px;font-size:5.3px;letter-spacing:0.413px;font-weight:bold;">Maße</div>
<div class="t" style="left:674.00px;top:211.96px;font-size:5.3px;letter-spacing:0.075px;font-weight:bold;">Mantelfläche</div>
<div class="t" style="left:674.00px;top:218.76px;font-size:5.3px;letter-spacing:0.008px;font-weight:bold;">projizierte Grundfläche</div>
<div class="t" style="left:674.00px;top:225.06px;font-size:5.3px;letter-spacing:0.045px;font-weight:bold;">Volumen</div>
<div class="t" style="left:763.50px;top:204.96px;font-size:5.3px;letter-spacing:-0.012px;font-weight:bold;">&lt;kein Inhalt definiert&gt;</div>
<div class="t" style="left:763.50px;top:211.76px;font-size:5.3px;letter-spacing:-0.012px;font-weight:bold;">&lt;kein Inhalt definiert&gt;</div>
<div class="t" style="left:763.50px;top:218.66px;font-size:5.3px;letter-spacing:-0.012px;font-weight:bold;">&lt;kein Inhalt definiert&gt;</div>
<div class="t" style="left:763.50px;top:224.76px;font-size:5.3px;letter-spacing:-0.012px;font-weight:bold;">&lt;kein Inhalt definiert&gt;</div>
<div id="inb"></div>
<div id="win"></div>
</body>
</html>
